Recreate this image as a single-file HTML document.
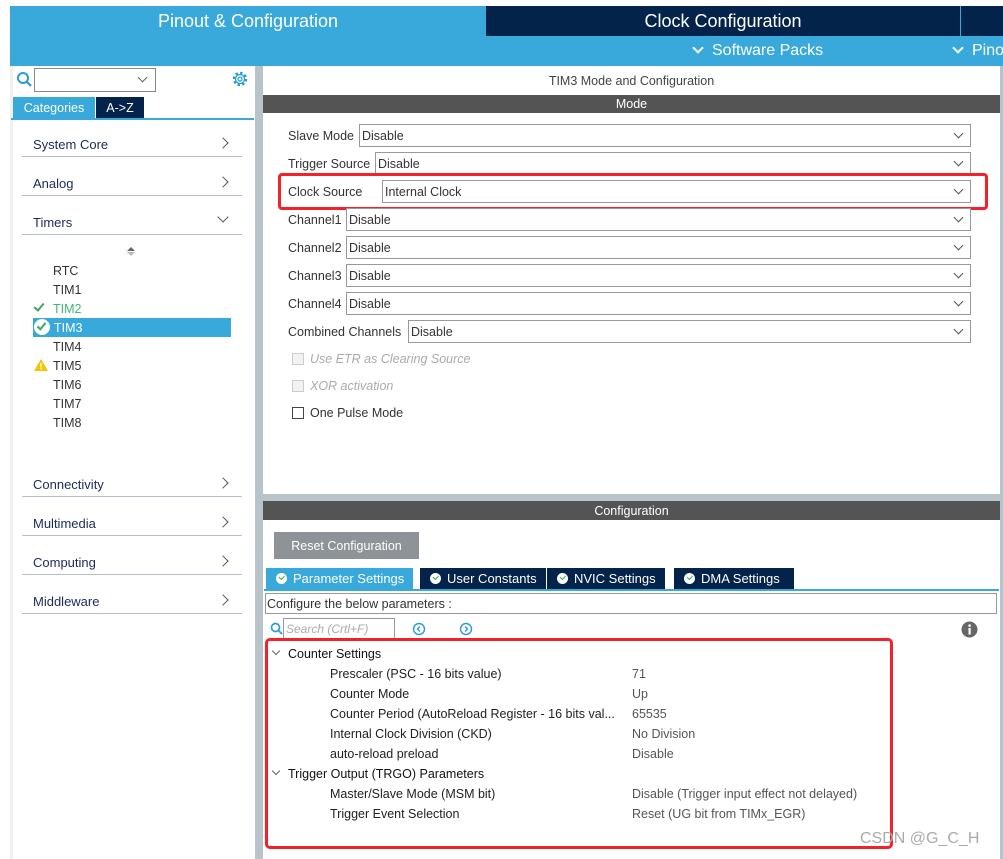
<!DOCTYPE html>
<html><head><meta charset="utf-8"><style>
*{margin:0;padding:0;box-sizing:border-box}
body{width:1003px;height:859px;position:relative;overflow:hidden;background:#fff;font-family:"Liberation Sans",Arial,sans-serif;font-size:13px;color:#333}
.a{position:absolute;white-space:nowrap}
.cat{position:absolute;left:33px;color:#1d2a5a;font-size:13px}
.catl{position:absolute;left:22px;width:220px;height:1px;background:#b5bec6}
.chev{position:absolute;left:219px;width:8px;height:8px;border-right:1.3px solid #555;border-top:1.3px solid #555;transform:rotate(45deg)}
.tim{position:absolute;left:53px;font-size:12.5px;color:#333}
.lbl{position:absolute;left:288px;font-size:12.5px;color:#333;white-space:nowrap}
.sel{position:absolute;right:32px;height:23px;border:1px solid #999;background:#fff;font-size:12.5px;padding:4px 2px 0;color:#333}
.sel:after{content:"";position:absolute;right:8px;top:5px;width:6px;height:6px;border-right:1px solid #555;border-bottom:1px solid #555;transform:rotate(45deg)}
.cb{position:absolute;left:292px;width:12px;height:12px;border:1px solid #444;background:#fff}
.row{position:absolute;font-size:12.5px;color:#222;white-space:nowrap}
.tab{position:absolute;top:568px;height:21px;background:#03234b;color:#fff;font-size:13px;padding:3px 0 0 10px;white-space:nowrap}
.ck{display:inline-block;width:11px;height:11px;border-radius:50%;background:#fff;position:relative;vertical-align:-1px;margin-right:6px}
.ck:after{content:"";position:absolute;left:3px;top:2px;width:4px;height:2.5px;border-left:1.6px solid #3aa85e;border-bottom:1.6px solid #3aa85e;transform:rotate(-45deg)}
</style></head><body>
<div class="a" style="left:10px;top:6px;width:993px;height:60px;background:#39a8da"></div>
<div class="a" style="left:10px;top:6px;width:476px;height:30px;color:#fff;font-size:18px;text-align:center;line-height:31px">Pinout &amp; Configuration</div>
<div class="a" style="left:486px;top:6px;width:474px;height:30px;background:#03234b;color:#fff;font-size:18px;text-align:center;line-height:31px">Clock Configuration</div>
<div class="a" style="left:961px;top:6px;width:42px;height:30px;background:#03234b"></div>
<div class="a" style="left:690px;top:42px;color:#fff;font-size:16px"><span style="display:inline-block;width:8px;height:8px;border-right:2px solid #fff;border-bottom:2px solid #fff;transform:rotate(45deg);margin:0 10px 3px 4px"></span>Software Packs</div>
<div class="a" style="left:950px;top:42px;color:#fff;font-size:16px"><span style="display:inline-block;width:8px;height:8px;border-right:2px solid #fff;border-bottom:2px solid #fff;transform:rotate(45deg);margin:0 10px 3px 4px"></span>Pino</div>
<div class="a" style="left:10px;top:66px;width:3px;height:793px;background:#eef0f2"></div>
<div class="a" style="left:255px;top:66px;width:8px;height:793px;background:#b9c4ca"></div>
<svg class="a" style="left:16px;top:71px" width="18" height="18"><circle cx="7" cy="7" r="5" fill="none" stroke="#2b9ad6" stroke-width="2"/><line x1="11" y1="11" x2="15" y2="15" stroke="#2b9ad6" stroke-width="2.2"/></svg>
<div class="a" style="left:34px;top:68px;width:122px;height:24px;border:1px solid #888"></div>
<div class="a" style="left:139px;top:74px;width:7px;height:7px;border-right:1px solid #666;border-bottom:1px solid #666;transform:rotate(45deg)"></div>
<svg class="a" style="left:231px;top:70px" width="18" height="18" viewBox="0 0 18 18"><circle cx="9" cy="9" r="6" fill="none" stroke="#2b9ad6" stroke-width="2.5" stroke-dasharray="2.4 2.3"/><circle cx="9" cy="9" r="4.5" fill="none" stroke="#2b9ad6" stroke-width="1.3"/><circle cx="9" cy="9" r="2" fill="none" stroke="#2b9ad6" stroke-width="1.2"/></svg>
<div class="a" style="left:13px;top:97px;width:82px;height:21px;background:#39a8da;color:#fff;font-size:12.5px;text-align:center;line-height:22px">Categories</div>
<div class="a" style="left:96px;top:97px;width:48px;height:21px;background:#03234b;color:#fff;font-size:12.5px;text-align:center;line-height:22px">A-&gt;Z</div>
<div class="a" style="left:11px;top:118px;width:243px;height:2px;background:#39a8da"></div>
<div class="cat" style="top:137px">System Core</div><div class="chev" style="top:139px"></div><div class="catl" style="top:156px"></div>
<div class="cat" style="top:176px">Analog</div><div class="chev" style="top:178px"></div><div class="catl" style="top:195px"></div>
<div class="cat" style="top:215px">Timers</div><div class="chev" style="top:213px;transform:rotate(135deg)"></div><div class="catl" style="top:234px"></div>
<div class="a" style="left:127px;top:247px;width:0;height:0;border-left:4px solid transparent;border-right:4px solid transparent;border-bottom:4px solid #666"></div>
<div class="a" style="left:127px;top:252px;width:0;height:0;border-left:4px solid transparent;border-right:4px solid transparent;border-top:4px solid #bbb"></div>
<div class="tim" style="top:264px">RTC</div>
<div class="tim" style="top:283px">TIM1</div>
<div class="tim" style="top:302px;color:#3cb878">TIM2</div>
<div class="a" style="left:36px;top:301px;width:6px;height:10px;border-right:2.5px solid #3aa85e;border-bottom:2.5px solid #3aa85e;transform:rotate(40deg)"></div>
<div class="a" style="left:33px;top:318px;width:198px;height:19px;background:#39a8da"></div>
<div class="a" style="left:34px;top:319px;width:16px;height:16px;border-radius:50%;background:#fff"></div>
<div class="a" style="left:39px;top:321px;width:5px;height:9px;border-right:2.5px solid #3aa85e;border-bottom:2.5px solid #3aa85e;transform:rotate(40deg)"></div>
<div class="tim" style="top:321px;left:54px;color:#fff">TIM3</div>
<div class="tim" style="top:340px">TIM4</div>
<svg class="a" style="left:34px;top:359px" width="14" height="12"><polygon points="7,0 14,12 0,12" fill="#f5c400"/><rect x="6.3" y="4" width="1.4" height="4.5" fill="#fff"/><rect x="6.3" y="9.3" width="1.4" height="1.4" fill="#fff"/></svg>
<div class="tim" style="top:359px">TIM5</div>
<div class="tim" style="top:378px">TIM6</div>
<div class="tim" style="top:397px">TIM7</div>
<div class="tim" style="top:416px">TIM8</div>
<div class="cat" style="top:477px">Connectivity</div><div class="chev" style="top:479px"></div><div class="catl" style="top:496px"></div>
<div class="cat" style="top:516px">Multimedia</div><div class="chev" style="top:518px"></div><div class="catl" style="top:535px"></div>
<div class="cat" style="top:555px">Computing</div><div class="chev" style="top:557px"></div><div class="catl" style="top:574px"></div>
<div class="cat" style="top:594px">Middleware</div><div class="chev" style="top:596px"></div><div class="catl" style="top:613px"></div>
<div class="a" style="left:1000px;top:66px;width:3px;height:793px;background:#b9c4ca"></div>
<div class="a" style="left:263px;top:74px;width:737px;text-align:center;font-size:12.5px;color:#444">TIM3 Mode and Configuration</div>
<div class="a" style="left:263px;top:95px;width:737px;height:18px;background:#545454;color:#fff;font-size:12.5px;text-align:center;line-height:19px">Mode</div>
<div class="lbl" style="top:129px">Slave Mode</div><div class="sel" style="top:124px;left:359px">Disable</div>
<div class="lbl" style="top:157px">Trigger Source</div><div class="sel" style="top:152px;left:375px">Disable</div>
<div class="lbl" style="top:185px">Clock Source</div><div class="sel" style="top:180px;left:382px">Internal Clock</div>
<div class="a" style="left:278px;top:173px;width:710px;height:37px;border:3px solid #f4202a;border-radius:4px"></div>
<div class="lbl" style="top:213px">Channel1</div><div class="sel" style="top:208px;left:346px">Disable</div>
<div class="lbl" style="top:241px">Channel2</div><div class="sel" style="top:236px;left:346px">Disable</div>
<div class="lbl" style="top:269px">Channel3</div><div class="sel" style="top:264px;left:346px">Disable</div>
<div class="lbl" style="top:297px">Channel4</div><div class="sel" style="top:292px;left:346px">Disable</div>
<div class="lbl" style="top:325px">Combined Channels</div><div class="sel" style="top:320px;left:408px">Disable</div>
<div class="cb" style="top:353px;border-color:#ccc;background:#f2f2f2"></div><div class="lbl" style="top:352px;left:310px;color:#aaa;font-style:italic">Use ETR as Clearing Source</div>
<div class="cb" style="top:380px;border-color:#ccc;background:#f2f2f2"></div><div class="lbl" style="top:379px;left:310px;color:#aaa;font-style:italic">XOR activation</div>
<div class="cb" style="top:407px"></div><div class="lbl" style="top:406px;left:310px">One Pulse Mode</div>
<div class="a" style="left:263px;top:494px;width:737px;height:7px;background:#b9c4ca"></div>
<div class="a" style="left:263px;top:501px;width:737px;height:19px;background:#545454;color:#fff;font-size:12.5px;text-align:center;line-height:20px">Configuration</div>
<div class="a" style="left:274px;top:532px;width:145px;height:27px;background:#8e9398;color:#fff;font-size:12.5px;text-align:center;line-height:28px">Reset Configuration</div>
<div class="tab" style="left:266px;width:147px;background:#39a8da"><span class="ck"></span>Parameter Settings</div>
<div class="tab" style="left:420px;width:126px"><span class="ck"></span>User Constants</div>
<div class="tab" style="left:547px;width:118px"><span class="ck"></span>NVIC Settings</div>
<div class="tab" style="left:674px;width:120px"><span class="ck"></span>DMA Settings</div>
<div class="a" style="left:264px;top:589px;width:735px;height:2px;background:#39a8da"></div>
<div class="a" style="left:265px;top:593px;width:732px;height:21px;border:1px solid #999;font-size:12.5px;padding:3px 1px;color:#333">Configure the below parameters :</div>
<svg class="a" style="left:270px;top:622px" width="13" height="13"><circle cx="5.5" cy="5.5" r="4" fill="none" stroke="#2b9ad6" stroke-width="1.7"/><line x1="8.5" y1="8.5" x2="12" y2="12" stroke="#2b9ad6" stroke-width="1.8"/></svg>
<div class="a" style="left:283px;top:618px;width:112px;height:21px;border:1px solid #999;font-size:12px;color:#aaa;font-style:italic;padding:3px 2px">Search (Crtl+F)</div>
<svg class="a" style="left:412px;top:622px" width="14" height="14"><circle cx="7" cy="7" r="5.5" fill="none" stroke="#2b9ad6" stroke-width="1.4"/><polyline points="8,4.5 5.5,7 8,9.5" fill="none" stroke="#2b9ad6" stroke-width="1.4"/></svg>
<svg class="a" style="left:459px;top:622px" width="14" height="14"><circle cx="7" cy="7" r="5.5" fill="none" stroke="#2b9ad6" stroke-width="1.4"/><polyline points="6,4.5 8.5,7 6,9.5" fill="none" stroke="#2b9ad6" stroke-width="1.4"/></svg>
<svg class="a" style="left:961px;top:621px" width="17" height="17"><circle cx="8.5" cy="8.5" r="8" fill="#666"/><rect x="7.5" y="7" width="2.2" height="6.5" fill="#fff"/><circle cx="8.6" cy="4.6" r="1.3" fill="#fff"/></svg>
<div class="a" style="left:265px;top:638px;width:628px;height:211px;border:3px solid #f4202a;border-radius:5px"></div>
<div class="a" style="left:273px;top:648px;width:6px;height:6px;border-right:1px solid #666;border-bottom:1px solid #666;transform:rotate(45deg)"></div>
<div class="row" style="left:288px;top:647px;color:#111">Counter Settings</div>
<div class="row" style="left:330px;top:667px">Prescaler (PSC - 16 bits value)</div><div class="row" style="left:632px;top:667px;color:#555">71</div>
<div class="row" style="left:330px;top:687px">Counter Mode</div><div class="row" style="left:632px;top:687px;color:#555">Up</div>
<div class="row" style="left:330px;top:707px">Counter Period (AutoReload Register - 16 bits val...</div><div class="row" style="left:632px;top:707px;color:#555">65535</div>
<div class="row" style="left:330px;top:727px">Internal Clock Division (CKD)</div><div class="row" style="left:632px;top:727px;color:#555">No Division</div>
<div class="row" style="left:330px;top:747px">auto-reload preload</div><div class="row" style="left:632px;top:747px;color:#555">Disable</div>
<div class="a" style="left:273px;top:768px;width:6px;height:6px;border-right:1px solid #666;border-bottom:1px solid #666;transform:rotate(45deg)"></div>
<div class="row" style="left:288px;top:767px;color:#111">Trigger Output (TRGO) Parameters</div>
<div class="row" style="left:330px;top:787px">Master/Slave Mode (MSM bit)</div><div class="row" style="left:632px;top:787px;color:#555">Disable (Trigger input effect not delayed)</div>
<div class="row" style="left:330px;top:807px">Trigger Event Selection</div><div class="row" style="left:632px;top:807px;color:#555">Reset (UG bit from TIMx_EGR)</div>
<div class="a" style="left:860px;top:830px;font-size:16px;color:#aaa">CSDN @G_C_H</div>
</body></html>
